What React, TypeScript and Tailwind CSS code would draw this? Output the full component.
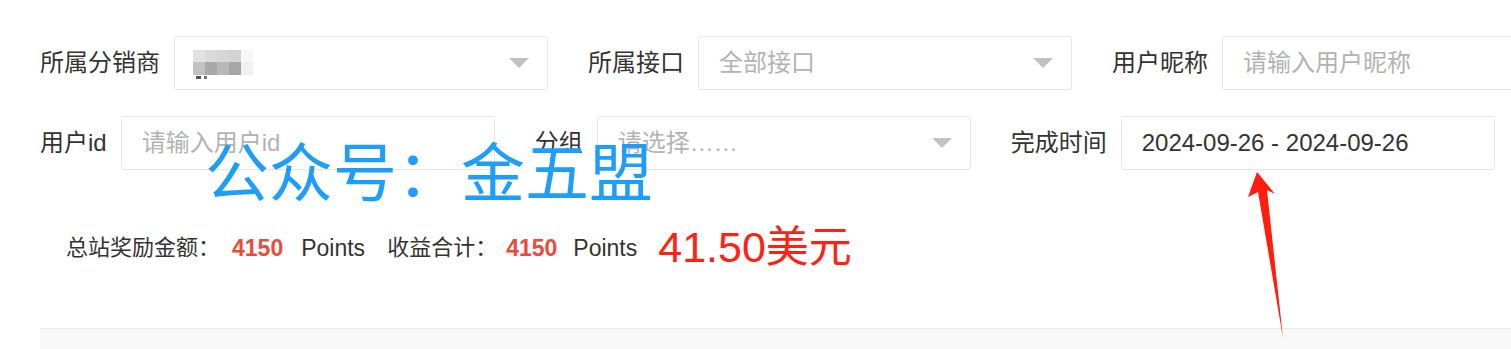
import React from 'react';

const labelCls = 'mr-[14px] text-[24px] leading-none text-[#333]';
const boxCls =
  'flex h-[54px] w-[374px] shrink-0 items-center justify-between rounded-[3px] border border-[#e6e6e6] bg-white pl-5 pr-[18px] text-[24px] leading-none';

function Caret() {
  return (
    <span className="h-0 w-0 border-l-[10px] border-r-[10px] border-t-[10px] border-l-transparent border-r-transparent border-t-[#c2c2c2]" />
  );
}

// pixelated nickname in the first select
function Mosaic() {
  const top = ['#e2e2e2', '#dadada', '#d6d6d6', '#d2d2d2', '#f7f7f7'];
  const bottom = ['#c2c2c2', '#a9a9a9', '#b9b9b9', '#a6a6a6', '#f1f1f1'];
  return (
    <div className="relative -ml-[2px] mt-[2px] flex flex-col">
      <div className="flex">
        {top.map((c, i) => (
          <div key={i} className="h-[12px] w-[12px]" style={{ background: c }} />
        ))}
      </div>
      <div className="flex">
        {bottom.map((c, i) => (
          <div key={i} className="h-[13px] w-[12px]" style={{ background: c }} />
        ))}
      </div>
      <div className="mt-[1px] flex gap-[3px] pl-[3px]">
        <div className="h-[3px] w-[5px] bg-[#555]" />
        <div className="h-[3px] w-[3px] bg-[#777]" />
      </div>
    </div>
  );
}

interface FieldProps {
  label: string;
  children: React.ReactNode;
  caret?: boolean;
}

function Field({ label, children, caret }: FieldProps) {
  return (
    <div className="flex shrink-0 items-center">
      <span className={labelCls}>{label}</span>
      <div className={boxCls}>
        <div className="flex items-center">{children}</div>
        {caret && <Caret />}
      </div>
    </div>
  );
}

export default function App() {
  return (
    <div className="relative h-[349px] w-[1511px] overflow-hidden bg-white font-['Liberation_Sans','Noto_Sans_CJK_SC',sans-serif]">
      <div className="pl-10 pt-[36px]">
        {/* Filters row 1 */}
        <div className="flex gap-10 whitespace-nowrap">
          <Field label="所属分销商" caret>
            <Mosaic />
          </Field>
          <Field label="所属接口" caret>
            <span className="text-[#b3b3b3]">全部接口</span>
          </Field>
          <Field label="用户昵称">
            <span className="text-[#b3b3b3]">请输入用户昵称</span>
          </Field>
        </div>

        {/* Filters row 2 */}
        <div className="mt-[26px] flex gap-10 whitespace-nowrap">
          <Field label="用户id">
            <span className="text-[#b3b3b3]">请输入用户id</span>
          </Field>
          <Field label="分组" caret>
            <span className="text-[#b3b3b3]">请选择……</span>
          </Field>
          <Field label="完成时间">
            <span className="text-[#333]">2024-09-26 - 2024-09-26</span>
          </Field>
        </div>

        {/* Totals */}
        <div className="ml-[26px] mt-[56px] flex h-[44px] items-center whitespace-nowrap text-[22px] leading-none text-[#333]">
          <span>总站奖励金额：</span>
          <span className="ml-[12px] text-[23px] font-bold text-[#e84c3d]">4150</span>
          <span className="ml-[18px] text-[23px]">Points</span>
          <span className="ml-[22px]">收益合计：</span>
          <span className="ml-[9px] text-[23px] font-bold text-[#e84c3d]">4150</span>
          <span className="ml-[16px] text-[23px]">Points</span>
          <span className="-mt-[2px] ml-[21px] text-[43px] text-[#ff2113]">41.50美元</span>
        </div>

        {/* Table header strip */}
        <div className="mt-[58px] h-[40px] border-t border-[#ebebeb] bg-[#f8f8f8]" />
      </div>

      {/* Watermark */}
      <div className="absolute left-[205px] top-[136px] font-['Noto_Sans_CJK_SC',sans-serif] text-[64px] leading-none text-[#1e9dfb]">
        公众号：金五盟
      </div>

      {/* Red annotation arrow */}
      <svg className="absolute left-[1240px] top-[165px]" width="60" height="180" viewBox="0 0 60 180">
        <polygon points="17,7 35,29 27,25 43,173 18,27 8,32" fill="#ff1e0e" />
      </svg>
    </div>
  );
}
